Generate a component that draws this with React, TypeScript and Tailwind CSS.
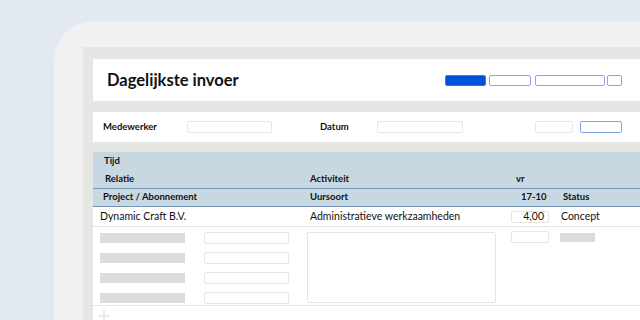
import React from 'react';

const font = { fontFamily: 'Lato, "Open Sans", sans-serif' };

const Input = ({ className = '' }: { className?: string }) => (
  <div className={`h-[12px] rounded-[2px] border border-[#e6e6e6] bg-white ${className}`} />
);

export default function App() {
  const rows = [0, 1, 2, 3];
  return (
    <div className="w-[640px] h-[320px] overflow-hidden bg-[#e3e9f0] pt-[21px] pl-[54px]" style={font}>
      {/* device frame */}
      <div className="h-[400px] w-[700px] rounded-tl-[40px] bg-[#f1f1f1] pt-[26px] pl-[29px]">
        <div className="flex h-[380px] flex-col bg-[#e6e6e4] pt-[12px] pl-[10px]">
          {/* header */}
          <div className="flex h-[42px] items-center bg-white pl-[14px]">
            <h1 className="w-[338px] text-[16.5px] font-bold text-[#111]">Dagelijkste invoer</h1>
            <div className="flex items-center">
              <div className="h-[11px] w-[41px] rounded-[2px] border border-[#3d7ae0] bg-[#0052d9]" />
              <div className="ml-[3px] h-[11px] w-[42px] rounded-[2px] border border-[#86a9e6] bg-white" />
              <div className="ml-[4px] h-[11px] w-[70px] rounded-[2px] border border-[#86a9e6] bg-white" />
              <div className="ml-[2px] h-[11px] w-[15px] rounded-[2px] border border-[#86a9e6] bg-white" />
            </div>
          </div>

          {/* filter bar */}
          <div className="mt-[11px] flex h-[30px] items-center bg-white pl-[10px] text-[9.5px] font-bold text-[#111]">
            <span className="w-[84px]">Medewerker</span>
            <Input className="w-[85px]" />
            <span className="ml-[48px] w-[57px]">Datum</span>
            <Input className="w-[86px]" />
            <Input className="ml-[72px] w-[38px]" />
            <div className="ml-[7px] h-[12px] w-[42px] rounded-[2px] border border-[#7fa6e8] bg-white" />
          </div>

          {/* table */}
          <div className="mt-[10px] flex flex-col bg-white text-[10.5px] text-[#111]">
            <div className="flex flex-col bg-[#c8d8e2] text-[9.5px] font-bold">
              <div className="flex h-[18px] items-center pl-[11px]">Tijd</div>
              <div className="flex h-[19px] items-center border-b border-[#7596b4]">
                <span className="w-[217px] pl-[12px]">Relatie</span>
                <span className="w-[206px]">Activiteit</span>
                <span>vr</span>
              </div>
              <div className="flex h-[18px] items-center border-b border-[#7596b4]">
                <span className="w-[217px] pl-[10px]">Project / Abonnement</span>
                <span className="w-[211px]">Uursoort</span>
                <span className="w-[42px]">17-10</span>
                <span>Status</span>
              </div>
            </div>

            <div className="flex h-[20px] items-center border-b border-[#e4e4e4]">
              <span className="w-[217px] pl-[7px]">Dynamic Craft B.V.</span>
              <span className="w-[201px]">Administratieve werkzaamheden</span>
              <div className="flex h-[12px] w-[38px] items-center justify-end rounded-[2px] border border-[#e4e4e4] pr-[4px]">4,00</div>
              <span className="ml-[12px]">Concept</span>
            </div>

            <div className="flex h-[79px] border-b border-[#e4e4e4] pt-[5px]">
              <div className="flex w-[214px] flex-col gap-[8px] pl-[7px]">
                {rows.map((r) => (
                  <div key={r} className="flex items-center">
                    <div className="h-[10px] w-[85px] bg-[#dcdcdc]" />
                    <Input className="ml-[19px] w-[85px]" />
                  </div>
                ))}
              </div>
              <div className="h-[71px] w-[189px] rounded-[2px] border border-[#e4e4e4]" />
              <Input className="ml-[15px] -mt-[1px] w-[38px]" />
              <div className="ml-[11px] mt-[1px] h-[9px] w-[35px] bg-[#dcdcdc]" />
            </div>

            <div className="flex h-[20px] items-center pl-[5px]">
              <svg width="12" height="12" viewBox="0 0 12 12">
                <path d="M6 0v12M0 6h12" stroke="#d6d6d6" strokeWidth="1" />
              </svg>
            </div>
          </div>
        </div>
      </div>
    </div>
  );
}
